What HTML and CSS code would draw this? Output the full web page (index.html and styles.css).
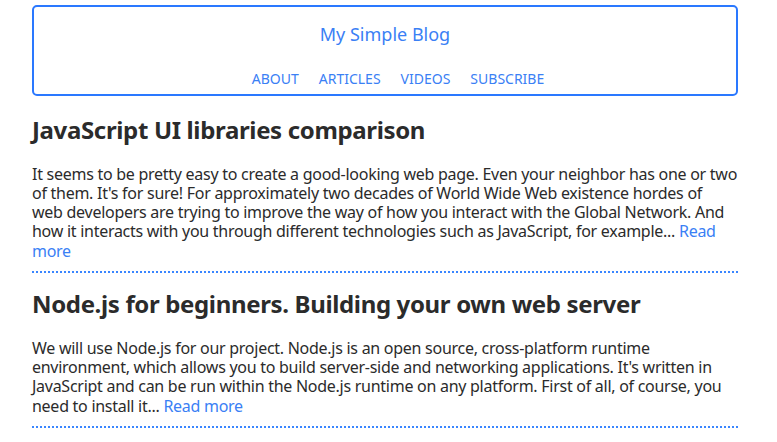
FILE: index.html
```html
<!DOCTYPE html>
<html>
<head>
<meta charset="utf-8">
<title>My Simple Blog</title>
<link rel="stylesheet" href="styles.css">
</head>
<body>
<div class="page">
  <header class="site-header">
    <div class="site-title"><a href="#">My Simple Blog</a></div>
    <nav class="site-nav">
      <a href="#">About</a>
      <a href="#">Articles</a>
      <a href="#">Videos</a>
      <a href="#">Subscribe</a>
    </nav>
  </header>
  <article class="post">
    <h2 class="post-title">JavaScript UI libraries comparison</h2>
    <p class="post-text">It seems to be pretty easy to create a good-looking web page. Even your neighbor has one or two of them. It's for sure! For approximately two decades of World Wide Web existence hordes of<br>web developers are trying to improve the way of how you interact with the Global Network. And how it interacts with you through different technologies such as JavaScript, for example... <a href="#">Read more</a></p>
  </article>
  <article class="post">
    <h2 class="post-title">Node.js for beginners. Building your own web server</h2>
    <p class="post-text">We will use Node.js for our project. Node.js is an open source, cross-platform runtime environment, which allows you to build server-side and networking applications. It's written in JavaScript and can be run within the Node.js runtime on any platform. First of all, of course, you need to install it... <a href="#">Read more</a></p>
  </article>
</div>
</body>
</html>
```
FILE: styles.css
```css
html, body {
  margin: 0;
  padding: 0;
  background: #ffffff;
}

body {
  font-family: "Noto Sans", "Open Sans", sans-serif;
  color: #2b2b2b;
  line-height: 1.2;
}

a {
  color: #3a80f5;
  text-decoration: none;
}

.page {
  width: 706px;
  margin: 5px 0 0 32px;
}

.site-header {
  display: flex;
  flex-direction: column;
  align-items: center;
  border: 2px solid #2a78ff;
  border-radius: 5px;
  padding: 17px 0 6px;
}

.site-title {
  font-size: 18px;
  line-height: 21.6px;
}

.site-nav {
  display: flex;
  gap: 20px;
  margin-top: 25.5px;
  padding-left: 26px;
  font-size: 14px;
  line-height: 16.8px;
  text-transform: uppercase;
}

.post {
  border-bottom: 2px dotted #3a86ff;
  padding-bottom: 10px;
}

.post-title {
  font-size: 24px;
  font-weight: bold;
  letter-spacing: -0.35px;
  margin: 20px 0 20px;
  line-height: 28.8px;
}

.post + .post .post-title {
  margin-top: 17.5px;
}

.post-text {
  font-size: 16px;
  letter-spacing: -0.27px;
  line-height: 19.2px;
  margin: 0;
}
```
